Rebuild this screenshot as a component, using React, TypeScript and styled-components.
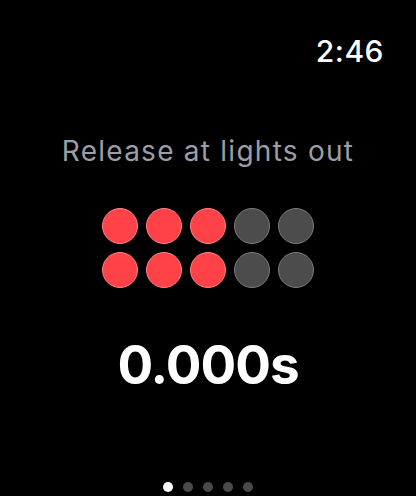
import styled, { createGlobalStyle } from 'styled-components';

const GlobalStyle = createGlobalStyle`
  html, body {
    margin: 0;
    padding: 0;
    background: #000;
  }
  body {
    font-family: Inter, 'Noto Sans', sans-serif;
    -webkit-font-smoothing: antialiased;
  }
`;

const Screen = styled.div`
  width: 416px;
  height: 496px;
  background: #000;
  display: flex;
  flex-direction: column;
  align-items: center;
  box-sizing: border-box;
  overflow: hidden;
`;

const StatusBar = styled.div`
  align-self: stretch;
  display: flex;
  justify-content: flex-end;
  padding: 33px 32px 0 0;
`;

const Clock = styled.span`
  color: #fff;
  font-size: 30px;
  line-height: 36px;
  font-weight: 500;
  letter-spacing: 0.5px;
`;

const Title = styled.h1`
  margin: 64px 0 0;
  color: #9b9ea6;
  font-size: 28px;
  line-height: 36px;
  font-weight: 400;
  letter-spacing: 1.25px;
`;

const Lights = styled.div`
  margin-top: 39px;
  display: grid;
  grid-template-columns: repeat(5, 36px);
  grid-auto-rows: 36px;
  gap: 8px;
`;

const Light = styled.div<{ $on: boolean }>`
  box-sizing: border-box;
  width: 36px;
  height: 36px;
  border-radius: 50%;
  background: ${(p) => (p.$on ? '#ff4148' : '#4c4c4c')};
  border: 1.5px solid ${(p) => (p.$on ? '#ff8288' : '#7c7c7c')};
`;

const Timer = styled.div`
  margin-top: 47px;
  color: #fff;
  font-size: 53px;
  line-height: 60px;
  font-weight: 700;
  letter-spacing: -1px;
`;

const Pager = styled.div`
  margin-top: auto;
  margin-bottom: 4px;
  display: flex;
  gap: 10px;
`;

const PageDot = styled.span<{ $active: boolean }>`
  width: 10px;
  height: 10px;
  border-radius: 50%;
  background: ${(p) => (p.$active ? '#fff' : '#4a4a4a')};
`;

const lit = 3;

export default function App() {
  return (
    <>
      <GlobalStyle />
      <Screen>
        <StatusBar>
          <Clock>2:46</Clock>
        </StatusBar>
        <Title>Release at lights out</Title>
        <Lights>
          {[0, 1].map((row) =>
            [0, 1, 2, 3, 4].map((col) => (
              <Light key={`${row}-${col}`} $on={col < lit} />
            ))
          )}
        </Lights>
        <Timer>0.000s</Timer>
        <Pager>
          {[0, 1, 2, 3, 4].map((i) => (
            <PageDot key={i} $active={i === 0} />
          ))}
        </Pager>
      </Screen>
    </>
  );
}
